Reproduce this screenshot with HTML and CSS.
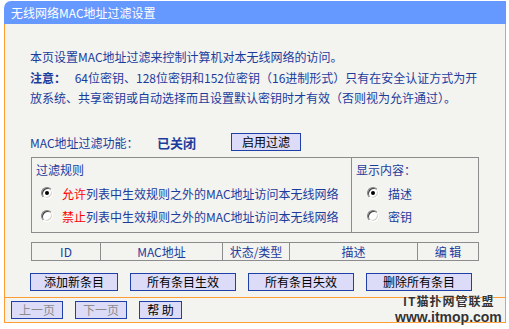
FILE: index.html
```html
<!DOCTYPE html>
<html>
<head>
  <meta charset="utf-8">
  <link rel="stylesheet" href="styles.css">
</head>
<body>
  <div class="page">
    <div class="title">无线网络MAC地址过滤设置</div>

    <div class="content">
      <p class="intro">本页设置MAC地址过滤来控制计算机对本无线网络的访问。</p>
      <p class="note"><b>注意：</b> 64位密钥、128位密钥和152位密钥（16进制形式）只有在安全认证方式为开<br>放系统、共享密钥或自动选择而且设置默认密钥时才有效（否则视为允许通过）。</p>

      <div class="status-row">
        <span class="status-label">MAC地址过滤功能：</span>
        <span class="status-value">已关闭</span>
        <button class="btn btn-enable">启用过滤</button>
      </div>

      <div class="rules">
        <div class="rules-main">
          <div class="group-title">过滤规则</div>
          <div class="radio-row">
            <span class="radio checked"></span>
            <span><em>允许</em>列表中生效规则之外的MAC地址访问本无线网络</span>
          </div>
          <div class="radio-row">
            <span class="radio"></span>
            <span><em>禁止</em>列表中生效规则之外的MAC地址访问本无线网络</span>
          </div>
        </div>
        <div class="rules-side">
          <div class="group-title">显示内容：</div>
          <div class="radio-row side">
            <span class="radio checked"></span>
            <span>描述</span>
          </div>
          <div class="radio-row side">
            <span class="radio"></span>
            <span>密钥</span>
          </div>
        </div>
      </div>

      <table class="list">
        <tr>
          <td class="col-id">ID</td>
          <td class="col-mac">MAC地址</td>
          <td class="col-state">状态/类型</td>
          <td class="col-desc">描述</td>
          <td class="col-edit">编 辑</td>
        </tr>
      </table>

      <div class="actions">
        <button class="btn btn-add">添加新条目</button>
        <button class="btn btn-wide">所有条目生效</button>
        <button class="btn btn-wide">所有条目失效</button>
        <button class="btn btn-wide">删除所有条目</button>
      </div>
    </div>

    <div class="footer">
      <button class="btn btn-page" disabled>上一页</button>
      <button class="btn btn-page" disabled>下一页</button>
      <button class="btn btn-help">帮 助</button>
    </div>
  </div>

  <div class="watermark">
    <div class="wm-cn">IT猫扑网管联盟</div>
    <div class="wm-url">www.itmop.com</div>
  </div>
</body>
</html>
```

FILE: styles.css
```css
body {
  margin: 0;
  background: #fff;
  font-family: "Noto Sans CJK SC", sans-serif;
  font-size: 12px;
  color: #1c3c9c;
}
.page {
  width: 502px;
  margin: 1px 0 0 4px;
}
.title {
  height: 23px;
  line-height: 23px;
  padding-left: 7px;
  background: #6699ff;
  color: #fff;
  font-size: 12px;
  border-top-left-radius: 7px;
}
.content {
  background: #f3f3f0;
  border-left: 1px solid #ff9c33;
  border-right: 1px solid #ff9c33;
  padding: 23px 0 6px 25px;
}
p {
  margin: 0;
  line-height: 20px;
}
.note {
  margin-top: 1px;
}
.note b {
  padding-right: 6px;
}
.status-row {
  display: flex;
  align-items: center;
  height: 20px;
  margin-top: 24px;
}
.status-label {
  width: 127px;
}
.status-value {
  width: 74px;
  font-weight: bold;
  font-size: 13px;
}
.btn {
  height: 18px;
  padding: 0;
  border: 1px solid #1e40a8;
  background: #dcdcf8;
  color: #000;
  font-family: "Noto Sans CJK SC", sans-serif;
  font-size: 12px;
  line-height: 16px;
}
.btn-enable {
  width: 70px;
}
.rules {
  display: grid;
  grid-template-columns: 320px 127px;
  width: 448px;
  margin: 5px 0 0 1px;
  border: 1px solid #8c8c8c;
  box-sizing: border-box;
  height: 76px;
}
.rules-main {
  border-right: 1px solid #8c8c8c;
  padding: 2px 0 0 4px;
}
.rules-side {
  padding: 2px 0 0 4px;
}
.group-title {
  line-height: 20px;
}
.radio-row {
  display: flex;
  align-items: center;
  gap: 9px;
  height: 20px;
  margin-top: 3px;
  padding-left: 5px;
}
.radio-row.side {
  padding-left: 11px;
}
.radio-row em {
  font-style: normal;
  color: #ff0000;
}
.radio {
  position: relative;
  width: 12px;
  height: 12px;
  box-sizing: border-box;
  border-radius: 50%;
  border: 1px solid;
  border-color: #808080 #ffffff #ffffff #808080;
  background: #fff;
  box-shadow: inset 1px 1px 0 #404040, inset -1px -1px 0 #d4d0c8;
}
.radio.checked::after {
  content: "";
  position: absolute;
  left: 3px;
  top: 3px;
  width: 4px;
  height: 4px;
  border-radius: 50%;
  background: #000;
}
.list {
  width: 448px;
  margin: 9px 0 0 1px;
  border-collapse: collapse;
}
.list td {
  height: 17px;
  padding: 0;
  border: 1px solid #8c8c8c;
  text-align: center;
  line-height: 17px;
}
.col-id { width: 68px; }
.col-mac { width: 121px; }
.col-state { width: 66px; }
.col-desc { width: 127px; }
.actions {
  display: flex;
  gap: 12px;
  margin-top: 12px;
}
.btn-add {
  width: 88px;
}
.btn-wide {
  width: 106px;
}
.footer {
  display: flex;
  gap: 12px;
  padding: 3px 0 3px 6px;
  border: 1px solid #ff9c33;
  background: #f3f3f0;
}
.btn-page {
  width: 52px;
  color: #8c8c8c;
}
.btn-help {
  width: 43px;
}
.watermark {
  position: absolute;
  left: 395px;
  top: 293px;
  color: #333;
  font-weight: bold;
  text-shadow: 0 0 2px #fff;
}
.wm-cn {
  margin-left: 8px;
  font-size: 12px;
  letter-spacing: 1px;
  line-height: 16px;
}
.wm-url {
  font-family: "Liberation Sans", sans-serif;
  font-size: 14px;
  line-height: 16px;
}
```
